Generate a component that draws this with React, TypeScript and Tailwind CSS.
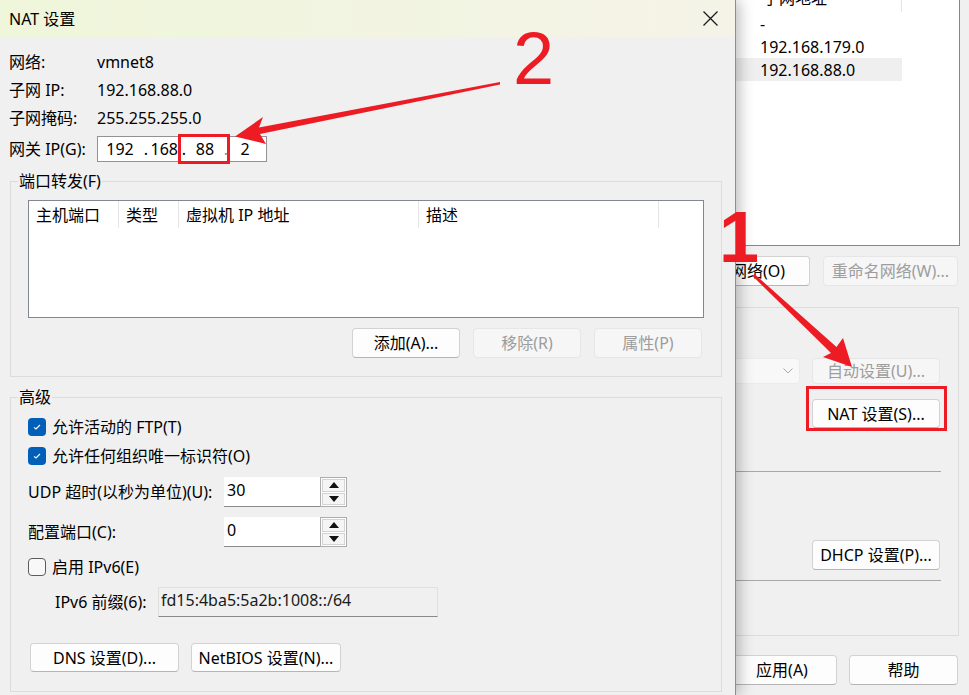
import React from "react";

const font = "font-['Noto_Sans','Noto_Sans_CJK_SC',sans-serif]";

type BtnProps = { children: React.ReactNode; className?: string; disabled?: boolean };

const Btn: React.FC<BtnProps> = ({ children, className = "", disabled = false }) => (
  <button
    className={`flex shrink-0 items-center justify-center whitespace-nowrap rounded-[4px] border ${
      disabled
        ? "border-[#e6e6e6] bg-[#f6f6f6] text-[#9d9d9d]"
        : "border-[#d2d2d2] border-b-[#b5b5b5] bg-[#fdfdfd] text-black"
    } ${className}`}
  >
    {children}
  </button>
);

const Check: React.FC<{ checked?: boolean }> = ({ checked }) =>
  checked ? (
    <span className="flex h-[18px] w-[18px] shrink-0 items-center justify-center rounded-[4px] bg-[#005fb8]">
      <svg width="10" height="8" viewBox="0 0 10 8">
        <path d="M2 4.3 L4 6 L8 2" fill="none" stroke="white" strokeWidth="1.1" />
      </svg>
    </span>
  ) : (
    <span className="h-[18px] w-[18px] shrink-0 rounded-[4px] border border-[#5c5c5c] bg-[#f8f8f8]" />
  );

const Spin: React.FC<{ value: string }> = ({ value }) => (
  <div className="flex h-[30px]">
    <div className="flex h-full w-[96px] items-start border-b border-[#8a8a8a] bg-white pl-[3px] pt-[1px]">
      {value}
    </div>
    <div className="flex h-full w-[27px] flex-col gap-[1px] border border-[#adadad] bg-white p-[1px]">
      <div className="flex flex-1 items-center justify-center border border-[#d4d4d4] bg-[#f5f5f5]">
        <svg width="10" height="6" viewBox="0 0 10 6">
          <path d="M0 6 L5 0 L10 6Z" fill="#111" />
        </svg>
      </div>
      <div className="flex flex-1 items-center justify-center border border-[#d4d4d4] bg-[#f5f5f5]">
        <svg width="10" height="6" viewBox="0 0 10 6">
          <path d="M0 0 L5 6 L10 0Z" fill="#111" />
        </svg>
      </div>
    </div>
  </div>
);

const InfoRow: React.FC<{ label: string; value: string }> = ({ label, value }) => (
  <div className="-ml-[1px] flex h-[28px] items-center">
    <span className="w-[88px]">{label}</span>
    <span>{value}</span>
  </div>
);

const columns = [
  { name: "主机端口", w: "w-[90px]" },
  { name: "类型", w: "w-[60px]" },
  { name: "虚拟机 IP 地址", w: "w-[240px]" },
  { name: "描述", w: "w-[240px]" },
];

const NatDialog: React.FC = () => (
  <div className="relative z-10 flex h-full w-[736px] shrink-0 flex-col border-r border-[#8e8e8e] bg-[#f0f0f0] shadow-[3px_0_14px_rgba(0,0,0,0.28)]">
    {/* title bar */}
    <div className="flex h-[37px] items-center justify-between bg-gradient-to-r from-[#eff6da] to-[#f5f3e8] pl-[9px] pr-[17px]">
      <span className="text-[16px]">NAT 设置</span>
      <svg width="15" height="15" viewBox="0 0 15 15">
        <path d="M0.5 0.5 L14.5 14.5 M14.5 0.5 L0.5 14.5" stroke="#1a1a1a" strokeWidth="1.3" />
      </svg>
    </div>

    <div className="flex flex-col pl-[10px] pr-[13px]">
      <div className="mt-[11px] flex flex-col">
        <InfoRow label="网络:" value="vmnet8" />
        <InfoRow label="子网 IP:" value="192.168.88.0" />
        <InfoRow label="子网掩码:" value="255.255.255.0" />
      </div>
      <div className="-ml-[1px] mt-[4px] flex h-[26px] items-center">
        <span className="w-[88px]">网关 IP(G):</span>
        <div className="flex h-[26px] w-[170px] items-center border border-[#929292] bg-white">
          <span className="w-[44px] text-center">192</span>
          <span className="w-[8px] text-center">.</span>
          <span className="w-[28px] text-right">168</span>
          <span className="w-[12px] text-center">.</span>
          <span className="w-[30px] text-center">88</span>
          <span className="w-[12px] text-center text-[#b98a4a]">.</span>
          <span className="w-[26px] text-center">2</span>
        </div>
      </div>

      {/* port forwarding */}
      <fieldset className="mt-[11px] border border-[#dcdcdc] px-[7px] pb-[18px]">
        <legend className="px-[1px] leading-[16px]">端口转发(F)</legend>
        <div className="flex flex-col px-[10px]">
          <div className="mt-[11px] h-[118px] border border-[#828790] bg-white">
            <div className="flex h-[27px] items-stretch">
              {columns.map((c) => (
                <div key={c.name} className={`${c.w} flex items-center border-r border-[#e5e5e5] pl-[7px]`}>
                  {c.name}
                </div>
              ))}
            </div>
          </div>
          <div className="mt-[10px] flex justify-end gap-[13px] pr-[2px]">
            <Btn className="h-[30px] w-[108px]">添加(A)...</Btn>
            <Btn className="h-[30px] w-[108px]" disabled>
              移除(R)
            </Btn>
            <Btn className="h-[30px] w-[108px]" disabled>
              属性(P)
            </Btn>
          </div>
        </div>
      </fieldset>

      {/* advanced */}
      <fieldset className="mt-[12px] border border-[#dcdcdc] px-[7px] pb-[19px]">
        <legend className="px-[1px] leading-[16px]">高级</legend>
        <div className="flex flex-col px-[10px]">
          <div className="mt-[10px] flex h-[24px] items-center gap-[6px]">
            <Check checked />
            <span>允许活动的 FTP(T)</span>
          </div>
          <div className="mt-[5px] flex h-[24px] items-center gap-[6px]">
            <Check checked />
            <span>允许任何组织唯一标识符(O)</span>
          </div>
          <div className="mt-[9px] flex h-[30px] items-center">
            <span className="w-[196px]">UDP 超时(以秒为单位)(U):</span>
            <Spin value="30" />
          </div>
          <div className="mt-[10px] flex h-[30px] items-center">
            <span className="w-[196px]">配置端口(C):</span>
            <Spin value="0" />
          </div>
          <div className="mt-[8px] flex h-[24px] items-center gap-[6px]">
            <Check />
            <span>启用 IPv6(E)</span>
          </div>
          <div className="mt-[8px] flex h-[30px] items-center pl-[27px]">
            <span className="w-[103px]">IPv6 前缀(6):</span>
            <div className="flex h-[30px] w-[280px] items-start border border-[#e0e0e0] border-b-[#8a8a8a] bg-[#f0f0f0] pl-[2px] text-[#1a1a1a]">
              fd15:4ba5:5a2b:1008::/64
            </div>
          </div>
          <div className="mt-[26px] flex gap-[12px] pl-[2px]">
            <Btn className="h-[29px] w-[149px]">DNS 设置(D)...</Btn>
            <Btn className="h-[29px] w-[150px]">NetBIOS 设置(N)...</Btn>
          </div>
        </div>
      </fieldset>
    </div>
  </div>
);

const BackWindow: React.FC = () => (
  <div className="relative flex-1 overflow-hidden">
    <div className="flex flex-col">
      {/* network list */}
      <div className="-mt-[16px] h-[262px] w-[224px] border-b border-r border-[#828790] bg-white">
        <div className="flex h-[28px]">
          <div className="flex w-[166px] items-center border-r border-[#e5e5e5] pl-[27px]">子网地址</div>
        </div>
        <div className="flex h-[23px] w-[166px] items-center pl-[24px]">-</div>
        <div className="flex h-[23px] w-[166px] items-center pl-[24px]">192.168.179.0</div>
        <div className="flex h-[23px] w-[166px] items-center bg-[#efefef] pl-[24px]">192.168.88.0</div>
      </div>

      <div className="mt-[10px] flex gap-[13px]">
        <Btn className="-ml-[57px] h-[30px] w-[131px] !justify-end pr-[24px]">网络(O)</Btn>
        <Btn className="h-[30px] w-[135px]" disabled>
          重命名网络(W)...
        </Btn>
      </div>

      {/* vmnet info group */}
      <div className="mt-[21px] flex h-[329px] w-[223px] flex-col border-b border-r border-t border-[#dcdcdc]">
        <div className="mt-[50px] flex h-[26px]">
          <div className="-ml-[20px] flex w-[84px] items-center justify-end rounded-[4px] border border-[#ebebeb] bg-[#f8f8f8] pr-[6px]">
            <svg width="10" height="6" viewBox="0 0 10 6">
              <path d="M0.5 0.5 L5 5 L9.5 0.5" fill="none" stroke="#a8a8a8" strokeWidth="1" />
            </svg>
          </div>
          <Btn className="ml-[12px] h-[26px] w-[128px]" disabled>
            自动设置(U)...
          </Btn>
        </div>
        <Btn className="ml-[76px] mt-[15px] h-[29px] w-[128px]">NAT 设置(S)...</Btn>
        <div className="mt-[43px] h-px w-[205px] bg-[#a8a8a8]" />
        <Btn className="ml-[76px] mt-[68px] h-[30px] w-[128px]">DHCP 设置(P)...</Btn>
        <div className="mt-[10px] h-px w-[205px] bg-[#a8a8a8]" />
      </div>

      <div className="mt-[19px] flex gap-[12px]">
        <Btn className="-ml-[9px] h-[30px] w-[110px]">应用(A)</Btn>
        <Btn className="h-[30px] w-[109px]">帮助</Btn>
      </div>
    </div>
  </div>
);

const Annotations: React.FC = () => (
  <svg className="pointer-events-none absolute inset-0 z-20" width="969" height="695" viewBox="0 0 969 695">
    <rect x="179.5" y="135.5" width="49" height="27" fill="none" stroke="#ed1c24" strokeWidth="3" />
    <rect x="807.5" y="387.5" width="138" height="42" fill="none" stroke="#ed1c24" strokeWidth="3" />
    <text x="513" y="84" fontSize="74" fontFamily="'Liberation Sans', sans-serif" fill="#ed1c24">
      2
    </text>
    <text x="719" y="262" fontSize="72" fontWeight="bold" fontFamily="'Liberation Sans', sans-serif" fill="#ed1c24">
      1
    </text>
    <polygon
      points="500,82 259,127.5 263,117 235,136.5 266,144 260,134 500,84.5"
      fill="#ed1c24"
    />
    <polygon
      points="754.5,274 836.5,347 843,338 852,367 823,357 831,353 752.5,276"
      fill="#ed1c24"
    />
  </svg>
);

export default function App() {
  return (
    <div className={`relative flex h-[695px] w-[969px] overflow-hidden bg-[#f0f0f0] text-[16px] text-black ${font}`}>
      <NatDialog />
      <BackWindow />
      <Annotations />
    </div>
  );
}
